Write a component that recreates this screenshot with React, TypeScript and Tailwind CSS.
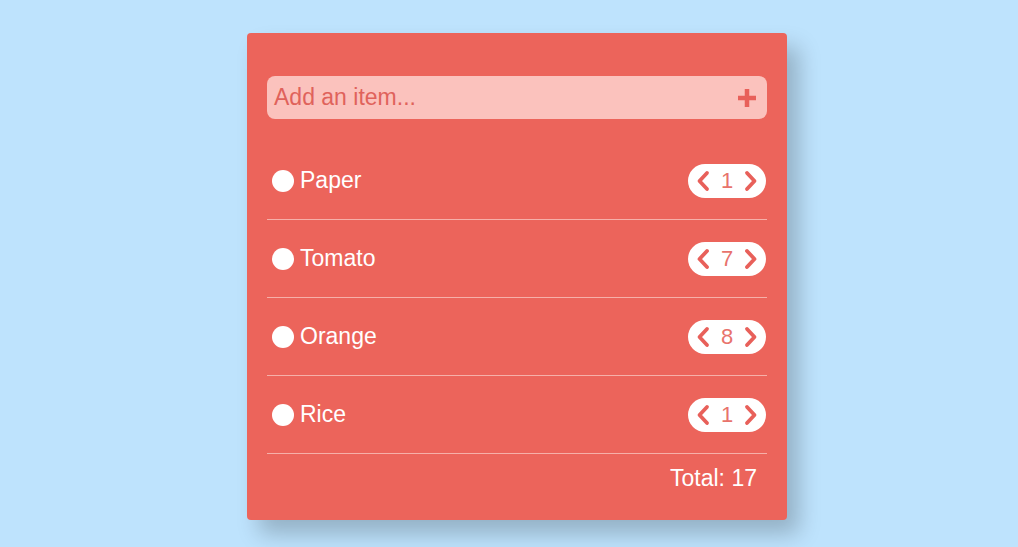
import React from 'react';

const items = [
  { name: 'Paper', qty: 1 },
  { name: 'Tomato', qty: 7 },
  { name: 'Orange', qty: 8 },
  { name: 'Rice', qty: 1 },
];

function Chevron({ dir }: { dir: 'left' | 'right' }) {
  return (
    <svg width="14" height="24" viewBox="0 0 14 24" fill="none">
      <path
        d={dir === 'left' ? 'M11 4 L3.5 12 L11 20' : 'M3 4 L10.5 12 L3 20'}
        stroke="#e8605a"
        strokeWidth="3.8"
        strokeLinecap="round"
        strokeLinejoin="round"
      />
    </svg>
  );
}

export default function App() {
  const total = items.reduce((s, i) => s + i.qty, 0);
  return (
    <div className="min-h-[547px] w-full bg-[#bee3fd] flex justify-center pl-4 pt-[33px] font-['Liberation_Sans',Arial,sans-serif]">
      <div className="w-[540px] h-[487px] bg-[#ec645b] rounded-[4px] shadow-[12px_14px_22px_rgba(0,0,0,0.22)] px-5 pt-[43px]">
        {/* Add item input */}
        <div className="h-[43px] rounded-[8px] bg-[#fbc2bd] flex items-center justify-between pl-[7px] pr-[10px]">
          <span className="text-[23px] text-[#e0625b]">Add an item...</span>
          <svg width="20" height="20" viewBox="0 0 20 20">
            <path d="M10 1 V19 M1 10 H19" stroke="#e8605a" strokeWidth="4.5" />
          </svg>
        </div>

        {/* Items */}
        <div className="mt-[23px]">
          {items.map((item) => (
            <div
              key={item.name}
              className="h-[78px] border-b border-[#f6b0a9] flex items-center justify-between pl-[5px] pr-px"
            >
              <div className="flex items-center gap-[6px]">
                <div className="w-[22px] h-[22px] rounded-full bg-white" />
                <span className="text-[23px] text-white">{item.name}</span>
              </div>
              <div className="w-[78px] h-[34px] rounded-full bg-white flex items-center justify-between px-[8px]">
                <Chevron dir="left" />
                <span className="text-[22px] text-[#e8736c] leading-none">{item.qty}</span>
                <Chevron dir="right" />
              </div>
            </div>
          ))}
        </div>

        {/* Total */}
        <div className="flex justify-end pr-[10px] pt-[7px]">
          <span className="text-[23px] text-white">Total: {total}</span>
        </div>
      </div>
    </div>
  );
}
